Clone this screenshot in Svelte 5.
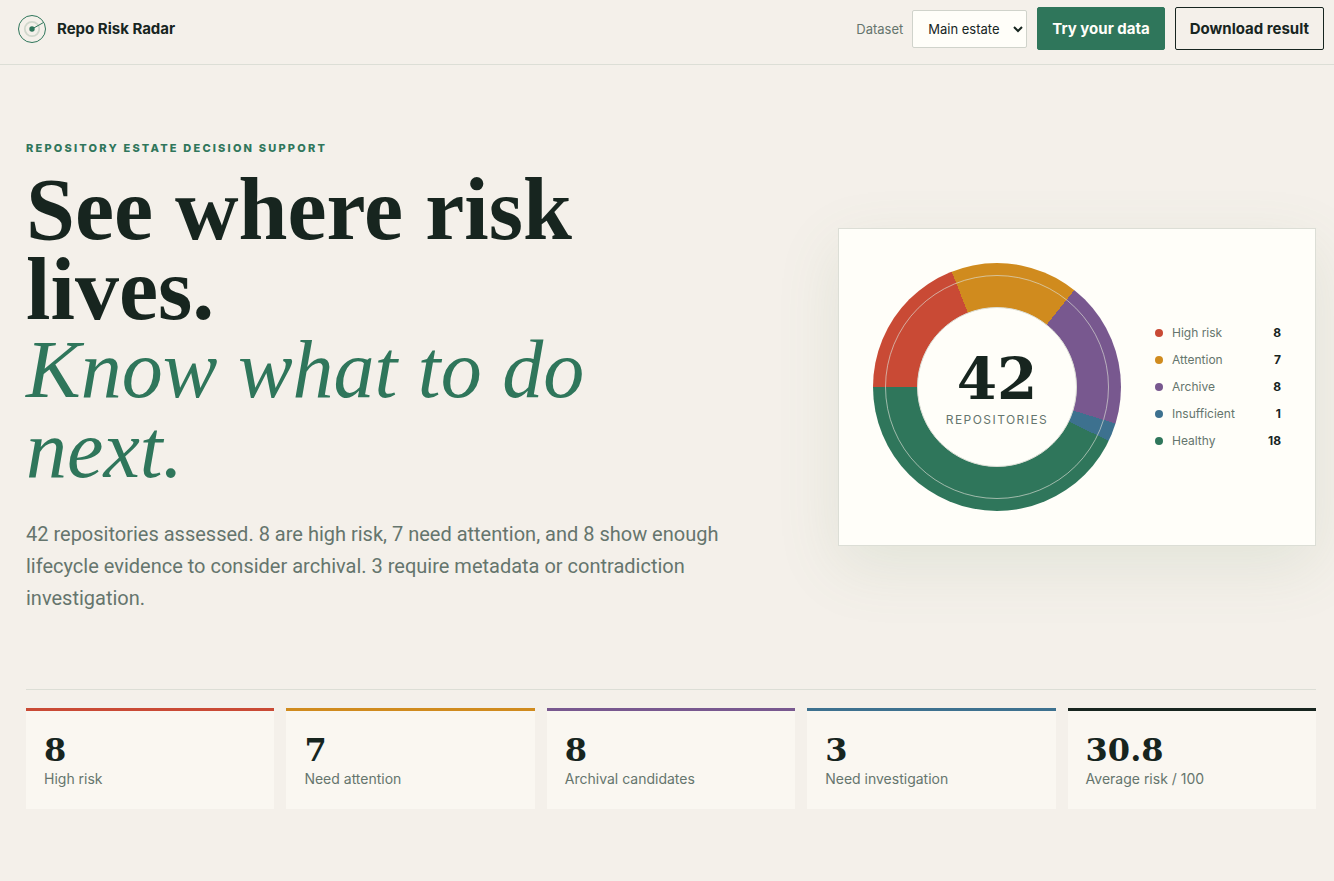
<script>
  const total = 42;

  const segments = [
    { label: 'High risk', count: 8, color: '#c94a35' },
    { label: 'Attention', count: 7, color: '#d08b1e' },
    { label: 'Archive', count: 8, color: '#78588f' },
    { label: 'Insufficient', count: 1, color: '#3d718f' },
    { label: 'Healthy', count: 18, color: '#2f765b' },
  ];

  const metrics = [
    { value: '8', label: 'High risk', color: '#c94a35' },
    { value: '7', label: 'Need attention', color: '#d08b1e' },
    { value: '8', label: 'Archival candidates', color: '#78588f' },
    { value: '3', label: 'Need investigation', color: '#3d718f' },
    { value: '30.8', label: 'Average risk / 100', color: '#17251f' },
  ];

  let dataset = 'main';

  // turn the counts into conic-gradient stops
  let start = 0;
  const stops = segments.map((s) => {
    const from = start;
    start += (s.count / total) * 360;
    return `${s.color} ${from}deg ${start}deg`;
  });
  const gradient = `conic-gradient(from 270deg, ${stops.join(', ')})`;
</script>

<header class="topbar">
  <a class="brand" href="/">
    <svg class="brand-mark" viewBox="0 0 28 28" aria-hidden="true">
      <circle cx="14" cy="14" r="13.5" fill="none" stroke="#2f765b" />
      <circle cx="14" cy="14" r="7.2" fill="none" stroke="#d0d7cc" stroke-width="1.8" />
      <path d="M14 14 25.5 7.5" stroke="#2f765b" />
      <circle cx="14" cy="14" r="2.7" fill="#2f765b" />
    </svg>
    <span>Repo Risk Radar</span>
  </a>

  <div class="actions">
    <label class="dataset">
      <span>Dataset</span>
      <select bind:value={dataset}>
        <option value="main">Main estate</option>
      </select>
    </label>
    <button class="button primary" type="button">Try your data</button>
    <button class="button" type="button">Download result</button>
  </div>
</header>

<main>
  <section class="hero">
    <div class="hero-copy">
      <p class="eyebrow">Repository estate decision support</p>
      <h1>See where risk lives. <em>Know what to do next.</em></h1>
      <p class="lede">
        42 repositories assessed. 8 are high risk, 7 need attention, and 8 show enough lifecycle
        evidence to consider archival. 3 require metadata or contradiction investigation.
      </p>
    </div>

    <div class="estate-card">
      <div class="donut" style="background: {gradient}">
        <div class="donut-hole">
          <strong>{total}</strong>
          <span>Repositories</span>
        </div>
      </div>
      <ul class="legend">
        {#each segments as s}
          <li>
            <i class="dot" style="background: {s.color}"></i>
            <span>{s.label}</span>
            <b>{s.count}</b>
          </li>
        {/each}
      </ul>
    </div>
  </section>

  <section class="metrics">
    {#each metrics as m}
      <article class="metric" style="border-color: {m.color}">
        <strong>{m.value}</strong>
        <span>{m.label}</span>
      </article>
    {/each}
  </section>
</main>

<style>
  :global(body) {
    --ink: #17251f;
    --muted: #65756d;
    --green: #2f765b;
    --line: #dcded6;
    --paper: #fffef9;
    --serif: Georgia, 'Liberation Serif', serif;
    --numerals: Georgia, 'DejaVu Serif', serif;

    background: #f4f0ea;
    color: var(--ink);
    font-family: Inter, sans-serif;
    font-size: 16px;
  }

  .topbar {
    display: flex;
    align-items: center;
    justify-content: space-between;
    padding: 7px 10px 14px 18px;
    border-bottom: 1px solid var(--line);
  }

  .brand {
    display: flex;
    align-items: center;
    gap: 11px;
    color: inherit;
    font-size: 15px;
    font-weight: 700;
    text-decoration: none;
  }

  .brand-mark {
    width: 28px;
    height: 28px;
  }

  .actions {
    display: flex;
    align-items: center;
    gap: 10px;
  }

  .dataset {
    display: flex;
    align-items: center;
    gap: 9px;
    color: var(--muted);
    font-size: 13px;
  }

  select {
    height: 38px;
    padding: 0 10px 0 11px;
    border: 1px solid #d0d3cb;
    border-radius: 2px;
    background: var(--paper);
    color: var(--ink);
    font: inherit;
  }

  .button {
    height: 43px;
    padding: 0 14px;
    border: 1px solid var(--ink);
    border-radius: 2px;
    background: transparent;
    color: var(--ink);
    font: inherit;
    font-size: 15px;
    font-weight: 700;
  }

  .primary {
    border-color: var(--green);
    background: var(--green);
    color: var(--paper);
  }

  main {
    padding: 0 18px 72px 26px;
  }

  .hero {
    display: grid;
    grid-template-columns: minmax(0, 1fr) 478px;
    gap: 100px;
    align-items: center;
    padding: 75px 0 55px;
  }

  .eyebrow {
    margin: 0 0 14px;
    color: var(--green);
    font-size: 11px;
    font-weight: 800;
    letter-spacing: 0.2em;
    line-height: 16px;
    text-transform: uppercase;
  }

  h1 {
    max-width: 640px;
    margin: 0;
    font-family: var(--serif);
    font-size: 88px;
    font-weight: 700;
    line-height: 80px;
  }

  h1 em {
    display: block;
    color: var(--green);
    font-size: 82px;
    font-weight: 400;
  }

  .lede {
    max-width: 720px;
    margin: 28px 0 20px;
    color: var(--muted);
    font-family: Roboto, sans-serif;
    font-size: 20px;
    line-height: 32px;
  }

  .estate-card {
    display: flex;
    align-items: center;
    gap: 34px;
    padding: 34px;
    border: 1px solid var(--line);
    background: var(--paper);
    box-shadow: 0 20px 60px rgba(100, 140, 90, 0.12);
  }

  .donut {
    position: relative;
    display: grid;
    flex: none;
    place-items: center;
    width: 248px;
    height: 248px;
    border-radius: 50%;
  }

  .donut::after {
    content: '';
    position: absolute;
    inset: 12px;
    border: 1px solid rgba(220, 222, 214, 0.65);
    border-radius: 50%;
  }

  .donut-hole {
    display: flex;
    flex-direction: column;
    align-items: center;
    justify-content: center;
    box-sizing: border-box;
    width: 160px;
    height: 160px;
    border: 1px solid var(--line);
    border-radius: 50%;
    background: var(--paper);
  }

  .donut-hole strong {
    font-family: var(--numerals);
    font-size: 58px;
    line-height: 66px;
  }

  .donut-hole span {
    color: var(--muted);
    font-size: 12px;
    letter-spacing: 0.12em;
    line-height: 16px;
    text-transform: uppercase;
  }

  .legend {
    display: grid;
    flex: 1;
    gap: 11px;
    margin: 0;
    padding: 0;
    list-style: none;
    font-size: 12px;
    line-height: 16px;
  }

  .legend li {
    display: flex;
    align-items: center;
    gap: 9px;
    color: var(--muted);
  }

  .legend b {
    margin-left: auto;
    color: var(--ink);
  }

  .dot {
    width: 8px;
    height: 8px;
    border-radius: 50%;
  }

  .metrics {
    display: grid;
    grid-template-columns: repeat(5, minmax(0, 1fr));
    gap: 12px;
    padding-top: 18px;
    border-top: 1px solid var(--line);
  }

  .metric {
    display: flex;
    flex-direction: column;
    padding: 20px 18px;
    border-top: 3px solid;
    background: #faf7f1;
  }

  .metric strong {
    font-family: var(--numerals);
    font-size: 32px;
    line-height: 38px;
  }

  .metric span {
    color: var(--muted);
    font-size: 14px;
    line-height: 20px;
  }
</style>
